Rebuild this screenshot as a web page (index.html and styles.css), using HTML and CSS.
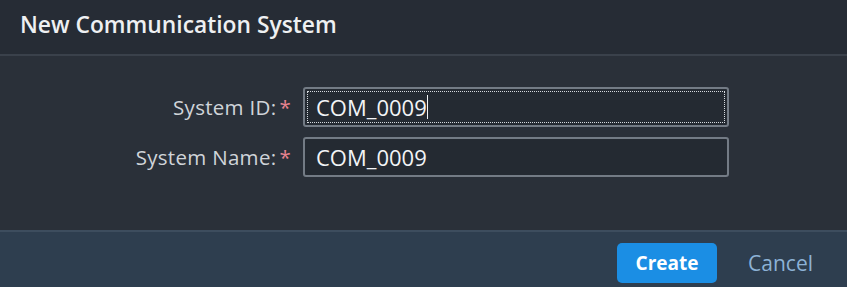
FILE: index.html
```html
<!DOCTYPE html>
<html lang="en">
<head>
  <meta charset="UTF-8">
  <title>New Communication System</title>
  <link rel="stylesheet" href="styles.css">
</head>
<body>

  <div class="dialog">
    <!-- Header -->
    <div class="dialog-header">New Communication System</div>

    <!-- Form -->
    <div class="dialog-body">
      <div class="form-row">
        <label class="form-label">System ID:<span class="req">*</span></label>
        <div class="form-input focused">COM_0009<span class="caret"></span></div>
      </div>
      <div class="form-row">
        <label class="form-label">System Name:<span class="req">*</span></label>
        <div class="form-input">COM_0009</div>
      </div>
    </div>

    <!-- Footer -->
    <div class="dialog-footer">
      <button class="btn btn-primary">Create</button>
      <button class="btn btn-link">Cancel</button>
    </div>
  </div>

</body>
</html>
```

FILE: styles.css
```css
body {
  margin: 0;
  font-family: "Open Sans", Arial, sans-serif;
  background-color: #2a3039;
  color: #fff;
}

.dialog {
  width: 847px;
  height: 287px;
  display: flex;
  flex-direction: column;
  overflow: hidden;
}

.dialog-header {
  height: 56px;
  box-sizing: border-box;
  padding: 9px 20px 0;
  background-color: #262c35;
  border-bottom: 2px solid #3a414b;
  font-size: 22.8px;
  font-weight: 600;
  color: #eef0f2;
}

.dialog-body {
  height: 174px;
  box-sizing: border-box;
  padding-top: 31px;
  display: flex;
  flex-direction: column;
  gap: 10px;
}

.form-row {
  display: flex;
  align-items: center;
}

.form-label {
  width: 303px;
  box-sizing: border-box;
  padding-right: 12px;
  text-align: right;
  font-size: 20.5px;
  letter-spacing: 0.3px;
  color: #d0d4d9;
}

.req {
  color: #e7828f;
  margin-left: 3px;
}

.form-input {
  position: relative;
  width: 426px;
  height: 40px;
  box-sizing: border-box;
  padding: 0 11px;
  display: flex;
  align-items: center;
  background-color: #242a32;
  border: 2px solid #737b85;
  border-radius: 3px;
  font-size: 22px;
  color: #f2f4f6;
}

.form-input.focused::after {
  content: "";
  position: absolute;
  inset: 2px;
  border: 1px dotted #d6dadf;
}

.caret {
  display: inline-block;
  width: 1px;
  height: 24px;
  background-color: #f2f4f6;
}

.dialog-footer {
  flex: 1;
  box-sizing: border-box;
  background-color: #2e3e4f;
  border-top: 2px solid #3d4d5e;
  display: flex;
  justify-content: flex-end;
  align-items: flex-start;
  padding: 11px 30px 0 0;
  gap: 27px;
}

.btn {
  font-family: inherit;
  border: none;
  cursor: pointer;
}

.btn-primary {
  background-color: #1b8ee4;
  color: #fff;
  font-size: 19px;
  font-weight: 700;
  width: 100px;
  height: 40px;
  border-radius: 5px;
}

.btn-link {
  background: none;
  color: #8db2d6;
  font-size: 21px;
  height: 40px;
  padding: 0 4px;
}
```
